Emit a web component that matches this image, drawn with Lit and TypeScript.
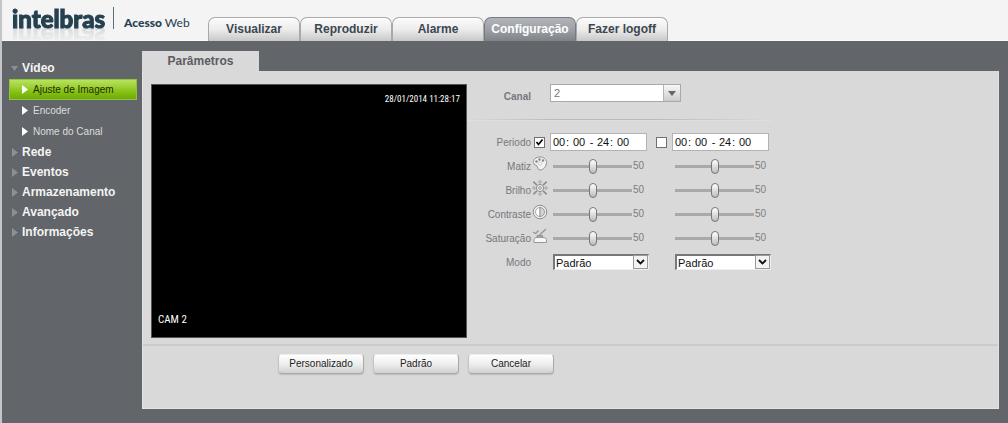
import { LitElement, html, css, svg, nothing } from "lit";
import { customElement, property, state } from "lit/decorators.js";
import { classMap } from "lit/directives/class-map.js";

const icons = {
  hue: svg`<path d="M8 1C4 1 1.200 3.500 1.500 6.500C1.800 9 4 8.800 5 10C6 11.200 5.500 14 8 14C11.500 14 14.500 10 14.500 6.500C14.500 3.500 12 1 8 1Z" fill="#f2f2f2" stroke="#8f8f8f"/>
    <g fill="#858585"><circle cx="4.500" cy="5.500" r="1.200"/><circle cx="7.500" cy="3.500" r="1.200"/><circle cx="11" cy="4.500" r="1.200"/></g><circle cx="8" cy="7.500" r="1.600" fill="#fff" stroke="#aaa" stroke-width=".6"/>`,
  brightness: svg`<g fill="#eee" stroke="#8c8c8c" stroke-width=".8"><circle cx="8" cy="2" r="1.200"/><circle cx="8" cy="14" r="1.200"/><circle cx="2" cy="8" r="1.200"/><circle cx="14" cy="8" r="1.200"/></g>
    <g stroke="#8c8c8c" stroke-width="1.600" stroke-linecap="round"><path d="M1.800 2.200L4.400 4.600M14.200 2.200L11.600 4.600M1.800 13.800L4.400 11.400M14.200 13.800L11.600 11.400"/></g>
    <circle cx="8" cy="8" r="3.600" fill="#eee" stroke="#8c8c8c"/><circle cx="8" cy="8" r="1.400" fill="#ddd" stroke="#8c8c8c" stroke-width=".8"/>`,
  contrast: svg`<circle cx="8" cy="8" r="6.800" fill="#ececec" stroke="#8f8f8f"/><path d="M8 3.500A4.500 4.500 0 0 0 8 12.500Z" fill="#fff" stroke="#999" stroke-width=".8"/><path d="M8 3.500A4.500 4.500 0 0 1 8 12.500Z" fill="#d5d5d5" stroke="#858585" stroke-width=".8"/>`,
  saturation: svg`<path d="M2 14.500V11.500Q2 10.500 4 9.500H12Q14.500 10.500 14.500 11.500V14.500Z" fill="#f6f6f6" stroke="#979797"/><path d="M5 9.500V7.500H10.500V9.500" fill="#a5a5a5" stroke="#8c8c8c" stroke-width=".8"/><path d="M7.500 7L14 1M1 4L3.500 5.500L6.500 2.500" stroke="#949494" stroke-width="1.200" fill="none"/>`,
};

const tabs = ["Visualizar", "Reproduzir", "Alarme", "Configuração", "Fazer logoff"];
const sections = ["Rede", "Eventos", "Armazenamento", "Avançado", "Informações"];
const videoPages = ["Ajuste de Imagem", "Encoder", "Nome do Canal"];
const levels = [
  { label: "Matiz", icon: icons.hue },
  { label: "Brilho", icon: icons.brightness },
  { label: "Contraste", icon: icons.contrast },
  { label: "Saturação", icon: icons.saturation },
];

@customElement("top-bar")
class TopBar extends LitElement {
  static styles = css`
    :host { display: flex; height: 41px; overflow: hidden; background: #f4f4f4; box-shadow: inset 0 -1px #fafafa; }
    .brand { display: flex; width: 206px; box-sizing: border-box; padding-left: 10px; color: #254150; font-family: Lato, sans-serif; }
    .logo { width: 101px; height: 38px; font-size: 24px; line-height: 38px; font-weight: 900; -webkit-text-stroke: 1px #254150;
      -webkit-box-reflect: below -21px linear-gradient(transparent 30%, rgba(0, 0, 0, 0.15) 75%); }
    .product { height: 22px; margin-top: 7px; padding-left: 10px; border-left: 1px solid #5b6e7b; font-size: 12px; line-height: 32px; white-space: nowrap; }
    .product b { font-weight: 900; }
    nav { display: flex; align-items: flex-end; }
    a { width: 92px; height: 24px; box-sizing: border-box; border: 1px solid #a9a9a9; border-bottom: 0; border-radius: 7px 7px 0 0;
      background: linear-gradient(#fbfbfb, #ececec 50%, #c8c8c8); box-shadow: inset 0 1px #fff; color: #3c4650; font: bold 12px/23px "Liberation Sans", Arial, sans-serif; text-align: center; text-decoration: none; }
    .active { background: linear-gradient(#b1b5ba, #9da1a6 50%, #7f8388); border-color: #777b80; box-shadow: none; color: #fff; }
  `;
  @state() private current = 3;
  render() {
    return html`
      <div class="brand"><div class="logo">intelbras</div><div class="product"><b>Acesso</b> Web</div></div>
      <nav>${tabs.map((t, i) => html`<a href="#" class=${classMap({ active: i === this.current })} @click=${() => (this.current = i)}>${t}</a>`)}</nav>
    `;
  }
}

@customElement("side-menu")
class SideMenu extends LitElement {
  static styles = css`
    :host { display: block; padding: 17px 5px 0 7px; box-sizing: border-box; }
    a { display: flex; align-items: center; color: #f4f4f4; text-decoration: none; white-space: nowrap; }
    .section { height: 20px; gap: 4px; padding-left: 2px; font-weight: bold; font-size: 12px; }
    .pages { padding-top: 1px; }
    .page { height: 21px; box-sizing: border-box; gap: 5px; padding-left: 12px; color: #dedede; font-size: 10px; }
    .page svg { fill: #fff; }
    .section svg { fill: #8c8f94; }
    .active { border: 1px solid #8cc63a; padding-left: 11px; background: linear-gradient(#b8e35e, #9ed236 35%, #80bd0c 70%, #72a80d); color: #202b05; }
    svg { width: 7px; height: 9px; flex: none; }
  `;
  render() {
    const right = svg`<path d="M1 0L7 4.500L1 9Z"/>`;
    return html`
      <a class="section" href="#"><svg viewBox="0 0 7 9"><path d="M0 2H7L3.500 7Z"/></svg>Vídeo</a>
      <div class="pages">${videoPages.map((p, i) => html`<a class=${classMap({ page: true, active: i === 0 })} href="#"><svg viewBox="0 0 7 9">${right}</svg>${p}</a>`)}</div>
      ${sections.map((s) => html`<a class="section" href="#"><svg viewBox="0 0 7 9">${right}</svg>${s}</a>`)}
    `;
  }
}

@customElement("level-slider")
class LevelSlider extends LitElement {
  static styles = css`
    :host { display: flex; align-items: center; gap: 1px; padding-left: 3px; }
    input { appearance: none; width: 79px; height: 16px; margin: 0; background: transparent; }
    input::-webkit-slider-runnable-track { height: 3px; background: #a9a9a9; }
    input::-webkit-slider-thumb { appearance: none; width: 8px; height: 15px; margin-top: -6px; box-sizing: border-box;
      border: 1px solid #777; border-radius: 4px; background: linear-gradient(#fff, #ddd 50%, #bbb); }
    output { color: #7d7d82; font-size: 10px; line-height: 16px; }
  `;
  @property() name = "";
  @property({ type: Number }) value = 50;
  render() {
    return html`<input type="range" aria-label=${this.name} .value=${String(this.value)}
      @input=${(e: Event) => (this.value = Number((e.target as HTMLInputElement).value))} /><output>${this.value}</output>`;
  }
}

@customElement("time-range")
class TimeRange extends LitElement {
  static styles = css`
    :host { display: flex; align-items: center; width: 97px; height: 18px; box-sizing: border-box; padding-left: 2px; border: 1px solid #b3b3b3; background: #fff; color: #111; }
    input { width: 13px; height: 14px; padding: 0; border: 0; margin: 0; background: none; color: inherit; font: 11px/14px "Liberation Sans", Arial, sans-serif; }
    span { width: 7px; line-height: 14px; font-size: 11px; }
    .dash { width: 11px; text-align: center; }
  `;
  @property() name = "";
  render() {
    const part = (v: string, what: string) => html`<input aria-label="${this.name} ${what}" maxlength="2" .value=${v} />`;
    return html`${part("00", "hora inicial")}<span>:</span>${part("00", "minuto inicial")}<span class="dash">-</span>
      ${part("24", "hora final")}<span>:</span>${part("00", "minuto final")}`;
  }
}

@customElement("image-form")
class ImageForm extends LitElement {
  static styles = css`
    :host { display: block; min-width: 0; color: #77777c; font-size: 10px; }
    .row { display: grid; grid-template-columns: 64px 19px 106px 16px 100px; align-items: center; height: 24px; }
    .label { text-align: right; }
    .channel { height: 18px; }
    .channel .label { font-weight: bold; padding-top: 6px; }
    .rule { height: 1px; width: 304px; margin: 17px 0 10px; background: linear-gradient(90deg, transparent, #b9b9b9 30%, #b9b9b9 60%, transparent); box-shadow: 0 1px #dfdfdf; }
    .icon { width: 16px; height: 16px; margin-left: 1px; margin-top: -4px; }
    .picker { position: relative; display: flex; }
    select { appearance: none; box-sizing: border-box; width: 100%; margin: 0; border-radius: 0; background: #fff; font: 11px/14px "Liberation Sans", Arial, sans-serif; }
    .wide { width: 131px; }
    .wide select { height: 18px; padding: 0 3px; border: 1px solid #a9a9a9; color: #77777c; }
    .mode { width: 96px; margin-left: 3px; }
    .mode select { height: 16px; padding: 0 1px; border: 1px solid; border-width: 2px 1px 1px 2px; border-color: #777 #eee #eee #777; color: #111; }
    .drop { position: absolute; right: 1px; top: 1px; display: grid; place-items: center; pointer-events: none; box-sizing: border-box; }
    .wide .drop { width: 17px; height: 16px; border-left: 1px solid #b3b3b3; background: linear-gradient(#f8f8f8, #ccc); }
    .mode .drop { width: 15px; height: 14px; border: 1px solid #999; background: #f3f3f3; }
    .tick { appearance: none; display: grid; place-items: center; width: 11px; height: 11px; box-sizing: border-box; margin: 0; border: 1px solid #707070; background: #fff; }
    .tick:checked { background: #fff url('data:image/svg+xml,<svg xmlns="http://www.w3.org/2000/svg" viewBox="0 0 9 9"><path d="M1.500 4L3.500 6.500L7.500 1.500" fill="none" stroke="black" stroke-width="1.700"/></svg>'); }
    .first { margin-left: 3px; }
    time-range { margin-right: auto; }
  `;
  render() {
    return html`
      <div class="row channel">
        <label class="label" for="canal">Canal</label><span></span>
        <div class="picker wide"><select id="canal"><option>1</option><option selected>2</option></select>
          <span class="drop"><svg width="8" height="5"><path d="M0 0H8L4 5Z" fill="#666"/></svg></span></div>
      </div>
      <div class="rule"></div>
      <div class="row">
        <label class="label" for="p1">Periodo</label><input class="tick first" id="p1" type="checkbox" checked />
        <time-range name="Periodo 1"></time-range>
        <input class="tick" type="checkbox" aria-label="Periodo 2" /><time-range name="Periodo 2"></time-range>
      </div>
      ${levels.map((l) => html`<div class="row">
        <span class="label">${l.label}</span><svg class="icon" viewBox="0 0 16 16" fill="none">${l.icon}</svg>
        <level-slider name="${l.label} 1"></level-slider><span></span><level-slider name="${l.label} 2"></level-slider>
      </div>`)}
      <div class="row">
        <label class="label" for="modo1">Modo</label><span></span>${this.mode("modo1")}<span></span>${this.mode("modo2")}
      </div>
    `;
  }
  private mode(id: string) {
    return html`<div class="picker mode"><select id=${id} aria-label=${id === "modo2" ? "Modo 2" : nothing}><option>Padrão</option></select>
      <span class="drop"><svg width="9" height="6"><path d="M1 1L4.500 4.500L8 1" fill="none" stroke="#111" stroke-width="1.800"/></svg></span></div>`;
  }
}

@customElement("app-root")
class AppRoot extends LitElement {
  static styles = css`
    :host { display: flex; flex-direction: column; min-height: 100vh; box-sizing: border-box; border-left: 2px solid #c4c5c7; background: #626569; font-family: "Liberation Sans", Arial, sans-serif; }
    .body { display: grid; grid-template-columns: 140px 1fr; flex: 1; }
    main { padding: 10px 9px 14px 0; display: flex; flex-direction: column; min-width: 0; }
    h1 { align-self: flex-start; width: 117px; height: 20px; margin: 0; background: #d9d9d9; color: #5a5c60; font-size: 12px; line-height: 21px; text-align: center; }
    .panel { flex: 1; display: flex; flex-direction: column; border: 1px solid #e3e4e4; border-top-color: #d9d9d9; background: #d9d9d9; }
    .settings { display: flex; padding: 12px 8px 6px; }
    .video { display: flex; flex-direction: column; justify-content: space-between; flex: none; width: 316px; height: 254px; box-sizing: border-box; padding: 6px 6px 9px; border: 1px solid #555; background: #000;
      color: #fff; font: 11px/16px "Roboto Condensed", "Open Sans Condensed", "Noto Sans Condensed", "Liberation Sans", sans-serif; }
    .time { align-self: flex-end; font-size: 9px; }
    .actions { display: flex; gap: 9px; padding: 8px 0 0 135px; border-top: 2px solid #cbcbcb; }
    button { width: 86px; height: 20px; padding: 0; border: 1px solid; border-color: #eee #aaa #aaa #c4c4c4; border-radius: 4px; background: linear-gradient(#fff, #eee 50%, #d0d0d0); box-shadow: 0 1px 1px #bbb; color: #222; font: 10px/18px "Liberation Sans", Arial, sans-serif; }
  `;
  render() {
    return html`
      <top-bar></top-bar>
      <div class="body">
        <side-menu></side-menu>
        <main>
          <h1>Parâmetros</h1>
          <section class="panel">
            <div class="settings">
              <div class="video"><span class="time">28/01/2014 11:28:17</span><span>CAM 2</span></div>
              <image-form></image-form>
            </div>
            <div class="actions"><button>Personalizado</button><button>Padrão</button><button>Cancelar</button></div>
          </section>
        </main>
      </div>
    `;
  }
}
